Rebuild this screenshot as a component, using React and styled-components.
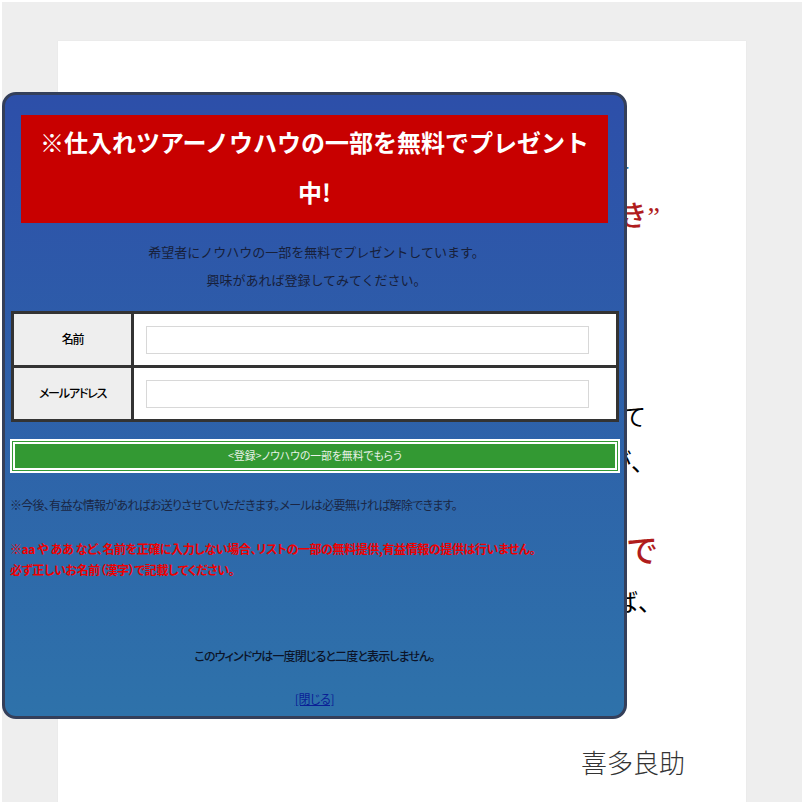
import React from "react";
import styled, { createGlobalStyle } from "styled-components";

const GlobalStyle = createGlobalStyle`
    html, body {
        margin: 0;
        padding: 0;
        background: #fff;
    }
    body {
        font-family: "Noto Sans CJK JP", "Noto Sans", sans-serif;
    }
`

export default function App() {
    return (
        <Frame>
            <GlobalStyle/>
            <Paper>
                <BackLine $top={118} $size={24} $color="#2a6fa8" $right={116}>す</BackLine>
                <BackLine $top={10} $size={28} $color="#b01c1c" $right={86} $bold>き”</BackLine>
                <BackLine $top={169} $size={24} $right={100}>て</BackLine>
                <BackLine $top={13} $size={24} $right={91}>が、</BackLine>
                <BackLine $top={56} $size={32} $color="#b01c1c" $right={88} $bold>で</BackLine>
                <BackLine $top={20} $size={24} $right={84}>ば、</BackLine>
                <Signature>喜多良助</Signature>
            </Paper>
            <Modal>
                <Banner>※仕入れツアーノウハウの一部を無料でプレゼント中!</Banner>
                <Lead>
                    希望者にノウハウの一部を無料でプレゼントしています。<br/>
                    興味があれば登録してみてください。
                </Lead>
                <FormTable>
                    <tbody>
                        <tr>
                            <LabelCell>名前</LabelCell>
                            <InputCell><TextInput type="text"/></InputCell>
                        </tr>
                        <tr>
                            <LabelCell>メールアドレス</LabelCell>
                            <InputCell><TextInput type="email"/></InputCell>
                        </tr>
                    </tbody>
                </FormTable>
                <SubmitBtn type="button">&lt;登録&gt;ノウハウの一部を無料でもらう</SubmitBtn>
                <Note>※今後、有益な情報があればお送りさせていただきます。メールは必要無ければ解除できます。</Note>
                <Warning>
                    ※aa や ああ など、名前を正確に入力しない場合、リストの一部の無料提供,有益情報の提供は行いません。<br/>
                    必ず正しいお名前（漢字）で記載してください。
                </Warning>
                <Notice>このウィンドウは一度閉じると二度と表示しません。</Notice>
                <CloseLink href="#close">[閉じる]</CloseLink>
            </Modal>
        </Frame>
    );
}

const Frame = styled.div`
    position: relative;
    box-sizing: border-box;
    margin: 2px;
    width: 800px;
    height: 800px;
    overflow: hidden;
    padding: 39px 56px 0;
    background: #eeeeee;
`
const Paper = styled.div`
    box-sizing: border-box;
    width: 688px;
    height: 761px;
    background: #fff;
    box-shadow: 0 0 1px #dcdcdc;
    overflow: hidden;
`
const BackLine = styled.div`
    margin-top: ${props => props.$top}px;
    padding-right: ${props => props.$right}px;
    text-align: right;
    font-family: "Liberation Serif", "Noto Sans CJK JP", serif;
    font-size: ${props => props.$size}px;
    line-height: 32px;
    font-weight: ${props => props.$bold ? 500 : 400};
    color: ${props => props.$color || "#000"};
`
const Signature = styled.div`
    margin-top: 125px;
    padding-right: 61px;
    text-align: right;
    font-size: 26px;
    line-height: 36px;
    font-weight: 300;
    color: #333;
`
const Modal = styled.div`
    position: absolute;
    left: 0;
    top: 90px;
    box-sizing: border-box;
    display: flex;
    flex-direction: column;
    width: 625px;
    height: 627px;
    padding: 20px 6px 0 6px;
    border: 3px solid #343f5a;
    border-radius: 14px;
    background: linear-gradient(#2d4fa9, #2e72aa);
    font-feature-settings: "palt";
    color: #17203a;
`
const Banner = styled.h1`
    margin: 0 10px;
    padding: 2px 18px 6px;
    background: #c80000;
    color: #fff;
    font-size: 24px;
    font-weight: 700;
    line-height: 50px;
    text-align: center;
    font-feature-settings: normal;
`
const Lead = styled.p`
    margin: 15px 0 17px;
    padding-left: 4px;
    font-size: 13px;
    line-height: 28px;
    text-align: center;
    font-feature-settings: normal;
`
const FormTable = styled.table`
    width: 608px;
    margin: 0;
    border-collapse: collapse;
    border: 3px solid #333;
    table-layout: fixed;
    background: #fff;
`
const LabelCell = styled.th`
    box-sizing: border-box;
    width: 120px;
    height: 54px;
    padding: 0 0 2px;
    border: 3px solid #333;
    background: #eeeeee;
    color: #000;
    font-size: 12px;
    font-weight: 500;
    letter-spacing: -1.2px;
`
const InputCell = styled.td`
    padding: 0 27px 0 12px;
    border: 3px solid #333;
`
const TextInput = styled.input`
    display: block;
    box-sizing: border-box;
    width: 100%;
    height: 28px;
    border: 1px solid #d8d8d8;
    background: #fff;
`
const SubmitBtn = styled.button`
    display: block;
    box-sizing: border-box;
    width: 610px;
    height: 34px;
    margin: 17px 0 0 -1px;
    padding: 0 0 3px;
    border: 5px double #fff;
    background: #339933;
    color: #e8f2e8;
    font-family: inherit;
    font-size: 10.8px;
    font-feature-settings: "palt";
`
const Note = styled.p`
    margin: 23px 0 0 -1px;
    font-size: 12px;
    line-height: 18px;
    letter-spacing: -0.72px;
    color: #1a2644;
`
const Warning = styled.p`
    margin: 24px 0 0 -1px;
    font-size: 12px;
    font-weight: 700;
    line-height: 21px;
    letter-spacing: -0.4px;
    color: #f00000;
`
const Notice = styled.p`
    margin: 67px 0 0;
    font-size: 12px;
    font-weight: 500;
    line-height: 18px;
    letter-spacing: -0.87px;
    text-align: center;
    color: #0c1428;
`
const CloseLink = styled.a`
    margin-top: 25px;
    align-self: center;
    font-size: 12px;
    line-height: 18px;
    letter-spacing: -0.4px;
    color: #0a1f96;
`
